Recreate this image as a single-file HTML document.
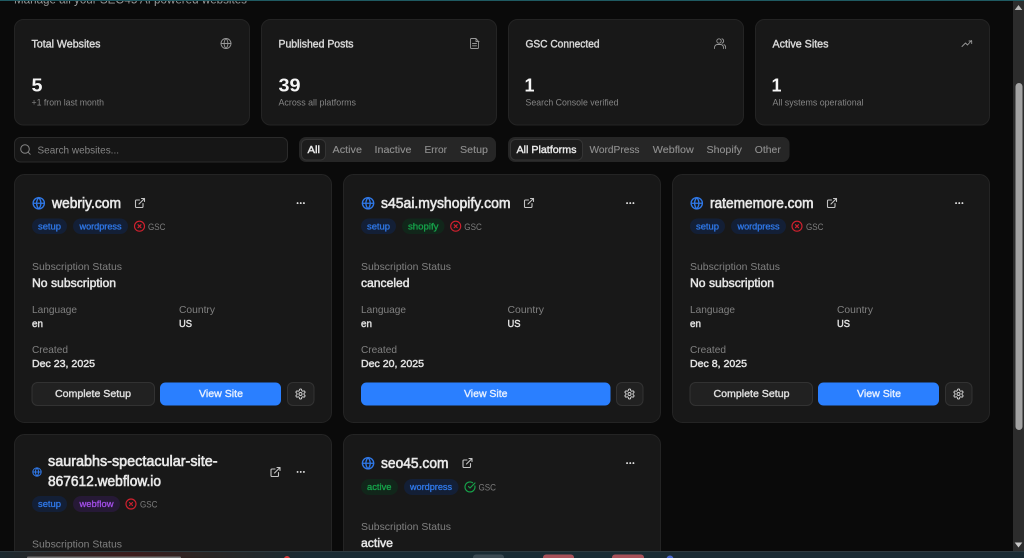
<!DOCTYPE html>
<html lang="en">
<head>
<meta charset="utf-8">
<title>Websites</title>
<style>
html,body{margin:0;padding:0;width:1024px;height:558px;overflow:hidden;background:#0a0a0a}
svg{display:block;filter:blur(.3px)}
text{font-family:"Liberation Sans",sans-serif;white-space:pre}
.st{font-size:11px;fill:#d8d8d8;stroke:#d8d8d8;stroke-width:.42px}
.n{font-size:18.500px;font-weight:700;fill:#f5f5f5}
.su{font-size:9.200px;fill:#858585}
.f{font-size:10.500px;fill:#8f8f8f;stroke:#8f8f8f;stroke-width:.12px}
.fa{font-size:10.500px;fill:#e8e8e8;stroke:#e8e8e8;stroke-width:.42px}
.ti{font-size:14.500px;fill:#e8e8e8;stroke:#e8e8e8;stroke-width:.62px}
.l{font-size:10.500px;fill:#808080}
.v{font-size:11.500px;fill:#e6e6e6;stroke:#e6e6e6;stroke-width:.48px}
.vs{font-size:10.500px;fill:#e2e2e2;stroke:#e2e2e2;stroke-width:.45px}
.b{font-size:9.500px;stroke-width:.32px}
.bb{fill:#2f78e8;stroke:#2f78e8}
.bg{fill:#16a34a;stroke:#16a34a}
.bp{fill:#a24ee8;stroke:#a24ee8}
.g{font-size:9.500px;fill:#7d7d7d}
.btn{font-size:10.500px;fill:#dedede;stroke:#dedede;stroke-width:.4px}
.blue{font-size:10.500px;fill:#e4eeff;stroke:#e4eeff;stroke-width:.38px}
.card{fill:#181818;stroke:#242424;stroke-width:1}
.ic{fill:none;stroke-linecap:round;stroke-linejoin:round}
</style>
</head>
<body>
<svg width="1024" height="558" viewBox="0 0 1024 558" xmlns="http://www.w3.org/2000/svg">
<defs>
<symbol id="globe" viewBox="0 0 24 24"><g class="ic" stroke="#2f78e8" stroke-width="2.400"><circle cx="12" cy="12" r="10"/><path d="M2 12h20M12 2a15 15 0 0 1 0 20M12 2a15 15 0 0 0 0 20"/></g></symbol>
<symbol id="ext" viewBox="0 0 24 24"><g class="ic" stroke="#c4c4c4" stroke-width="2.200"><path d="M15 3h6v6M10 14 21 3M18 13v6a2 2 0 0 1-2 2H5a2 2 0 0 1-2-2V8a2 2 0 0 1 2-2h6"/></g></symbol>
<symbol id="x" viewBox="0 0 24 24"><g class="ic" stroke="#d0202e" stroke-width="2.300"><circle cx="12" cy="12" r="10"/><path d="m15 9-6 6M9 9l6 6"/></g></symbol>
<symbol id="ok" viewBox="0 0 24 24"><g class="ic" stroke="#16a34a" stroke-width="2.300"><path d="M21.800 10A10 10 0 1 1 17 3.300"/><path d="m9 11 3 3L22 4"/></g></symbol>
<symbol id="gear" viewBox="0 0 24 24"><g class="ic" stroke="#cfcfcf" stroke-width="2"><path d="M12.220 2h-.44a2 2 0 0 0-2 2v.18a2 2 0 0 1-1 1.730l-.43.25a2 2 0 0 1-2 0l-.15-.08a2 2 0 0 0-2.730.73l-.22.38a2 2 0 0 0 .73 2.730l.15.1a2 2 0 0 1 1 1.720v.51a2 2 0 0 1-1 1.740l-.15.09a2 2 0 0 0-.73 2.730l.22.38a2 2 0 0 0 2.730.73l.15-.08a2 2 0 0 1 2 0l.43.25a2 2 0 0 1 1 1.730V20a2 2 0 0 0 2 2h.44a2 2 0 0 0 2-2v-.18a2 2 0 0 1 1-1.730l.43-.25a2 2 0 0 1 2 0l.15.08a2 2 0 0 0 2.730-.73l.22-.39a2 2 0 0 0-.73-2.730l-.15-.08a2 2 0 0 1-1-1.740v-.5a2 2 0 0 1 1-1.740l.15-.09a2 2 0 0 0 .73-2.730l-.22-.38a2 2 0 0 0-2.730-.73l-.15.08a2 2 0 0 1-2 0l-.43-.25a2 2 0 0 1-1-1.730V4a2 2 0 0 0-2-2z"/><circle cx="12" cy="12" r="3"/></g></symbol>
<symbol id="dots" viewBox="0 0 12 4"><circle cx="2" cy="2" r="1.200" fill="#e6e6e6"/><circle cx="6" cy="2" r="1.200" fill="#e6e6e6"/><circle cx="10" cy="2" r="1.200" fill="#e6e6e6"/></symbol>
</defs>

<rect width="1024" height="558" fill="#0a0a0a"/>

<!-- header -->
<text x="14" y="3.500" font-size="12" fill="#9a9a9a" textLength="233" lengthAdjust="spacingAndGlyphs">Manage all your SEO45 AI powered websites</text>
<rect x="0" y="0" width="1024" height="1" fill="#1f5a62"/>

<!-- stat cards -->
<rect class="card" x="14.500" y="19.500" width="235" height="105.500" rx="9"/>
<rect class="card" x="261.500" y="19.500" width="235" height="105.500" rx="9"/>
<rect class="card" x="508.500" y="19.500" width="235" height="105.500" rx="9"/>
<rect class="card" x="755.500" y="19.500" width="234" height="105.500" rx="9"/>

<text class="st" x="31.500" y="47.300" textLength="69" lengthAdjust="spacingAndGlyphs">Total Websites</text>
<text class="st" x="278.500" y="47.300" textLength="75" lengthAdjust="spacingAndGlyphs">Published Posts</text>
<text class="st" x="525.500" y="47.300" textLength="74" lengthAdjust="spacingAndGlyphs">GSC Connected</text>
<text class="st" x="772.500" y="47.300" textLength="56" lengthAdjust="spacingAndGlyphs">Active Sites</text>

<g class="ic" stroke="#989898" stroke-width="0.900">
<circle cx="226" cy="43.500" r="5"/><path d="M221 43.500h10M226 38.500a7.500 7.500 0 0 1 0 10M226 38.500a7.500 7.500 0 0 0 0 10"/>
<path d="M476 38.500h-4.500a1 1 0 0 0-1 1v8a1 1 0 0 0 1 1h6a1 1 0 0 0 1-1V41.500zM476 38.500v3h3M472.500 43.500h4M472.500 45.800h4"/>
<circle cx="719" cy="41" r="2.200"/><path d="M714.500 48.500v-1a3 3 0 0 1 3-3h3a3 3 0 0 1 3 3v1M722 38.800a2.300 2.300 0 0 1 0 4.400M724 44.600a3 3 0 0 1 1.600 2.600v1.300"/>
<path d="M962 46.500l3.500-3.500 2 2 4-4.500M969 41h2.700v2.600"/>
</g>

<text class="n" x="31.500" y="91.500" textLength="11" lengthAdjust="spacingAndGlyphs">5</text>
<text class="n" x="278.500" y="91.500" textLength="22" lengthAdjust="spacingAndGlyphs">39</text>
<text class="n" x="524.500" y="91.500" textLength="10" lengthAdjust="spacingAndGlyphs">1</text>
<text class="n" x="771.500" y="91.500" textLength="10" lengthAdjust="spacingAndGlyphs">1</text>

<text class="su" x="31.500" y="105.300" textLength="72.500" lengthAdjust="spacingAndGlyphs">+1 from last month</text>
<text class="su" x="278.500" y="105.300" textLength="77.500" lengthAdjust="spacingAndGlyphs">Across all platforms</text>
<text class="su" x="525.500" y="105.300" textLength="93" lengthAdjust="spacingAndGlyphs">Search Console verified</text>
<text class="su" x="772.500" y="105.300" textLength="91" lengthAdjust="spacingAndGlyphs">All systems operational</text>

<!-- search -->
<rect x="14.500" y="137.500" width="273" height="24.500" rx="6" fill="#161616" stroke="#2b2b2b"/>
<g class="ic" stroke="#858585" stroke-width="1"><circle cx="25" cy="149" r="4.300"/><path d="M28.200 152.300l2 2"/></g>
<text x="37.500" y="153.300" font-size="10.500" fill="#858585" textLength="81.500" lengthAdjust="spacingAndGlyphs">Search websites...</text>

<!-- filter 1 -->
<rect x="299" y="137" width="197" height="25" rx="7" fill="#262626"/>
<rect x="301.500" y="139.500" width="24" height="20.500" rx="5" fill="#1c1c1c" stroke="#343434"/>
<text class="fa" x="307.500" y="153" textLength="12.500" lengthAdjust="spacingAndGlyphs">All</text>
<text class="f" x="332.500" y="153" textLength="29.500" lengthAdjust="spacingAndGlyphs">Active</text>
<text class="f" x="374.500" y="153" textLength="37" lengthAdjust="spacingAndGlyphs">Inactive</text>
<text class="f" x="424.500" y="153" textLength="22.500" lengthAdjust="spacingAndGlyphs">Error</text>
<text class="f" x="460" y="153" textLength="28" lengthAdjust="spacingAndGlyphs">Setup</text>

<!-- filter 2 -->
<rect x="508" y="137" width="281.500" height="25" rx="7" fill="#262626"/>
<rect x="510.500" y="139.500" width="72" height="20.500" rx="5" fill="#1c1c1c" stroke="#343434"/>
<text class="fa" x="516.500" y="153" textLength="60" lengthAdjust="spacingAndGlyphs">All Platforms</text>
<text class="f" x="589.500" y="153" textLength="50" lengthAdjust="spacingAndGlyphs">WordPress</text>
<text class="f" x="652.800" y="153" textLength="41" lengthAdjust="spacingAndGlyphs">Webflow</text>
<text class="f" x="706.500" y="153" textLength="35.500" lengthAdjust="spacingAndGlyphs">Shopify</text>
<text class="f" x="754.800" y="153" textLength="26" lengthAdjust="spacingAndGlyphs">Other</text>

<!-- site card 1 -->
<rect class="card" x="14.500" y="174.500" width="317" height="248" rx="10"/>
<use href="#globe" x="32" y="196.500" width="13.500" height="13.500"/>
<text class="ti" x="52" y="207.800" textLength="69" lengthAdjust="spacingAndGlyphs">webriy.com</text>
<use href="#ext" x="134" y="197" width="12" height="12"/>
<use href="#dots" x="296" y="201.500" width="9.500" height="3.200"/>
<rect x="32" y="218.500" width="35" height="15.500" rx="7.700" fill="#131f36"/>
<text class="b bb" x="38" y="229.500" textLength="23" lengthAdjust="spacingAndGlyphs">setup</text>
<rect x="73" y="218.500" width="55" height="15.500" rx="7.700" fill="#131f36"/>
<text class="b bb" x="79.500" y="229.500" textLength="42" lengthAdjust="spacingAndGlyphs">wordpress</text>
<use href="#x" x="133.500" y="220.200" width="12" height="12"/>
<text class="g" x="148" y="229.800" textLength="17.500" lengthAdjust="spacingAndGlyphs">GSC</text>
<text class="l" x="32" y="270" textLength="90" lengthAdjust="spacingAndGlyphs">Subscription Status</text>
<text class="v" x="32" y="287" textLength="84" lengthAdjust="spacingAndGlyphs">No subscription</text>
<text class="l" x="32" y="313" textLength="45" lengthAdjust="spacingAndGlyphs">Language</text>
<text class="l" x="179" y="313" textLength="36" lengthAdjust="spacingAndGlyphs">Country</text>
<text class="vs" x="32" y="327" textLength="11" lengthAdjust="spacingAndGlyphs">en</text>
<text class="vs" x="179" y="327" textLength="13" lengthAdjust="spacingAndGlyphs">US</text>
<text class="l" x="32" y="353" textLength="36" lengthAdjust="spacingAndGlyphs">Created</text>
<text class="vs" x="32" y="367" textLength="63" lengthAdjust="spacingAndGlyphs">Dec 23, 2025</text>
<rect x="32" y="382.500" width="122.500" height="23" rx="5.500" fill="#212121" stroke="#323232"/>
<text class="btn" x="55" y="397" textLength="76" lengthAdjust="spacingAndGlyphs">Complete Setup</text>
<rect x="160" y="382.500" width="121" height="23" rx="5.500" fill="#2a7fff"/>
<text class="blue" x="199" y="397" textLength="44" lengthAdjust="spacingAndGlyphs">View Site</text>
<rect x="287.500" y="382.500" width="26.500" height="23" rx="5.500" fill="#212121" stroke="#323232"/>
<use href="#gear" x="294.500" y="388" width="12" height="12"/>

<!-- site card 2 -->
<rect class="card" x="343.500" y="174.500" width="317" height="248" rx="10"/>
<use href="#globe" x="361.300" y="196.500" width="13.500" height="13.500"/>
<text class="ti" x="381" y="207.800" textLength="129.500" lengthAdjust="spacingAndGlyphs">s45ai.myshopify.com</text>
<use href="#ext" x="523" y="197" width="12" height="12"/>
<use href="#dots" x="625.500" y="201.500" width="9.500" height="3.200"/>
<rect x="361" y="218.500" width="35" height="15.500" rx="7.700" fill="#131f36"/>
<text class="b bb" x="367" y="229.500" textLength="23" lengthAdjust="spacingAndGlyphs">setup</text>
<rect x="402" y="218.500" width="42.500" height="15.500" rx="7.700" fill="#11261a"/>
<text class="b bg" x="408" y="229.500" textLength="30.500" lengthAdjust="spacingAndGlyphs">shopify</text>
<use href="#x" x="449.700" y="220.200" width="12" height="12"/>
<text class="g" x="464.300" y="229.800" textLength="17.500" lengthAdjust="spacingAndGlyphs">GSC</text>
<text class="l" x="361" y="270" textLength="90" lengthAdjust="spacingAndGlyphs">Subscription Status</text>
<text class="v" x="361" y="287" textLength="48.500" lengthAdjust="spacingAndGlyphs">canceled</text>
<text class="l" x="361" y="313" textLength="45" lengthAdjust="spacingAndGlyphs">Language</text>
<text class="l" x="507.500" y="313" textLength="36.500" lengthAdjust="spacingAndGlyphs">Country</text>
<text class="vs" x="361" y="327" textLength="11" lengthAdjust="spacingAndGlyphs">en</text>
<text class="vs" x="507.500" y="327" textLength="13" lengthAdjust="spacingAndGlyphs">US</text>
<text class="l" x="361" y="353" textLength="36" lengthAdjust="spacingAndGlyphs">Created</text>
<text class="vs" x="361" y="367" textLength="63" lengthAdjust="spacingAndGlyphs">Dec 20, 2025</text>
<rect x="361" y="382.500" width="249.500" height="23" rx="5.500" fill="#2a7fff"/>
<text class="blue" x="464" y="397" textLength="43.500" lengthAdjust="spacingAndGlyphs">View Site</text>
<rect x="616.500" y="382.500" width="26.500" height="23" rx="5.500" fill="#212121" stroke="#323232"/>
<use href="#gear" x="623.500" y="388" width="12" height="12"/>

<!-- site card 3 -->
<rect class="card" x="672.500" y="174.500" width="317" height="248" rx="10"/>
<use href="#globe" x="690" y="196.500" width="13.500" height="13.500"/>
<text class="ti" x="710" y="207.800" textLength="103.500" lengthAdjust="spacingAndGlyphs">ratememore.com</text>
<use href="#ext" x="826" y="197" width="12" height="12"/>
<use href="#dots" x="954.500" y="201.500" width="9.500" height="3.200"/>
<rect x="690" y="218.500" width="35" height="15.500" rx="7.700" fill="#131f36"/>
<text class="b bb" x="696" y="229.500" textLength="23" lengthAdjust="spacingAndGlyphs">setup</text>
<rect x="731" y="218.500" width="55" height="15.500" rx="7.700" fill="#131f36"/>
<text class="b bb" x="737.500" y="229.500" textLength="42" lengthAdjust="spacingAndGlyphs">wordpress</text>
<use href="#x" x="791" y="220.200" width="12" height="12"/>
<text class="g" x="806" y="229.800" textLength="17.500" lengthAdjust="spacingAndGlyphs">GSC</text>
<text class="l" x="690" y="270" textLength="90" lengthAdjust="spacingAndGlyphs">Subscription Status</text>
<text class="v" x="690" y="287" textLength="84" lengthAdjust="spacingAndGlyphs">No subscription</text>
<text class="l" x="690" y="313" textLength="45" lengthAdjust="spacingAndGlyphs">Language</text>
<text class="l" x="837" y="313" textLength="36" lengthAdjust="spacingAndGlyphs">Country</text>
<text class="vs" x="690" y="327" textLength="11" lengthAdjust="spacingAndGlyphs">en</text>
<text class="vs" x="837" y="327" textLength="13" lengthAdjust="spacingAndGlyphs">US</text>
<text class="l" x="690" y="353" textLength="36" lengthAdjust="spacingAndGlyphs">Created</text>
<text class="vs" x="690" y="367" textLength="57" lengthAdjust="spacingAndGlyphs">Dec 8, 2025</text>
<rect x="690" y="382.500" width="122.500" height="23" rx="5.500" fill="#212121" stroke="#323232"/>
<text class="btn" x="713.500" y="397" textLength="76" lengthAdjust="spacingAndGlyphs">Complete Setup</text>
<rect x="818" y="382.500" width="121" height="23" rx="5.500" fill="#2a7fff"/>
<text class="blue" x="857" y="397" textLength="44" lengthAdjust="spacingAndGlyphs">View Site</text>
<rect x="945.500" y="382.500" width="26.500" height="23" rx="5.500" fill="#212121" stroke="#323232"/>
<use href="#gear" x="952.500" y="388" width="12" height="12"/>

<!-- site card 4 -->
<rect class="card" x="14.500" y="434.500" width="317" height="140" rx="10"/>
<use href="#globe" x="32" y="467" width="10" height="10"/>
<text class="ti" x="48" y="466" textLength="169.500" lengthAdjust="spacingAndGlyphs">saurabhs-spectacular-site-</text>
<text class="ti" x="48" y="486" textLength="113" lengthAdjust="spacingAndGlyphs">867612.webflow.io</text>
<use href="#ext" x="269.500" y="466" width="12" height="12"/>
<use href="#dots" x="296" y="470.300" width="9.500" height="3.200"/>
<rect x="32" y="496" width="35" height="16" rx="8" fill="#131f36"/>
<text class="b bb" x="38" y="507.200" textLength="23" lengthAdjust="spacingAndGlyphs">setup</text>
<rect x="73" y="496" width="47" height="16" rx="8" fill="#261936"/>
<text class="b bp" x="79.500" y="507.200" textLength="34" lengthAdjust="spacingAndGlyphs">webflow</text>
<use href="#x" x="125" y="498" width="12" height="12"/>
<text class="g" x="140" y="507.700" textLength="17.500" lengthAdjust="spacingAndGlyphs">GSC</text>
<text class="l" x="32" y="547.500" textLength="90" lengthAdjust="spacingAndGlyphs">Subscription Status</text>

<!-- site card 5 -->
<rect class="card" x="343.500" y="434.500" width="317" height="140" rx="10"/>
<use href="#globe" x="361.300" y="456.500" width="13.500" height="13.500"/>
<text class="ti" x="381" y="467.800" textLength="67.500" lengthAdjust="spacingAndGlyphs">seo45.com</text>
<use href="#ext" x="461.500" y="457" width="12" height="12"/>
<use href="#dots" x="625.500" y="461.500" width="9.500" height="3.200"/>
<rect x="361" y="479" width="37" height="16" rx="8" fill="#11261a"/>
<text class="b bg" x="367" y="490.200" textLength="24.500" lengthAdjust="spacingAndGlyphs">active</text>
<rect x="404" y="479" width="54.500" height="16" rx="8" fill="#131f36"/>
<text class="b bb" x="410" y="490.200" textLength="42" lengthAdjust="spacingAndGlyphs">wordpress</text>
<use href="#ok" x="464" y="481" width="12" height="12"/>
<text class="g" x="478.500" y="490.700" textLength="17.500" lengthAdjust="spacingAndGlyphs">GSC</text>
<text class="l" x="361" y="530" textLength="90" lengthAdjust="spacingAndGlyphs">Subscription Status</text>
<text class="v" x="361" y="547" textLength="32" lengthAdjust="spacingAndGlyphs">active</text>

<!-- scrollbar -->
<rect x="1013" y="1" width="11" height="550" fill="#2c2c2c"/>
<path d="M1018.500 5l3.800 5h-7.600z" fill="#b8b8b8"/>
<rect x="1015.500" y="83" width="7" height="347" rx="3.500" fill="#a3a3a3"/>
<path d="M1018.500 547.500l3.800-5h-7.600z" fill="#c8c8c8"/>

<!-- taskbar -->
<defs><linearGradient id="tb" x1="0" x2="1" y1="0" y2="0">
<stop offset="0" stop-color="#1b2a30"/><stop offset="0.05" stop-color="#2a2524"/><stop offset="0.13" stop-color="#3c1c1c"/><stop offset="0.2" stop-color="#2a2624"/><stop offset="0.3" stop-color="#1a2b33"/><stop offset="1" stop-color="#1a2b33"/>
</linearGradient></defs>
<rect x="0" y="551" width="1024" height="7" fill="url(#tb)"/>
<rect x="0" y="551" width="1024" height="1" fill="#2e3a3f"/>
<rect x="27" y="556.500" width="154" height="2" rx="1" fill="#777"/>
<circle cx="287" cy="559" r="3" fill="#d83a3a"/>
<rect x="473" y="554.500" width="31" height="6" rx="3" fill="#3c4a52"/>
<rect x="543" y="554.500" width="31" height="6" rx="3" fill="#a85058"/>
<rect x="612" y="554.500" width="32" height="6" rx="3" fill="#a85058"/>
<circle cx="670" cy="559" r="3.500" fill="#4a6ad0"/>
</svg>
</body>
</html>
